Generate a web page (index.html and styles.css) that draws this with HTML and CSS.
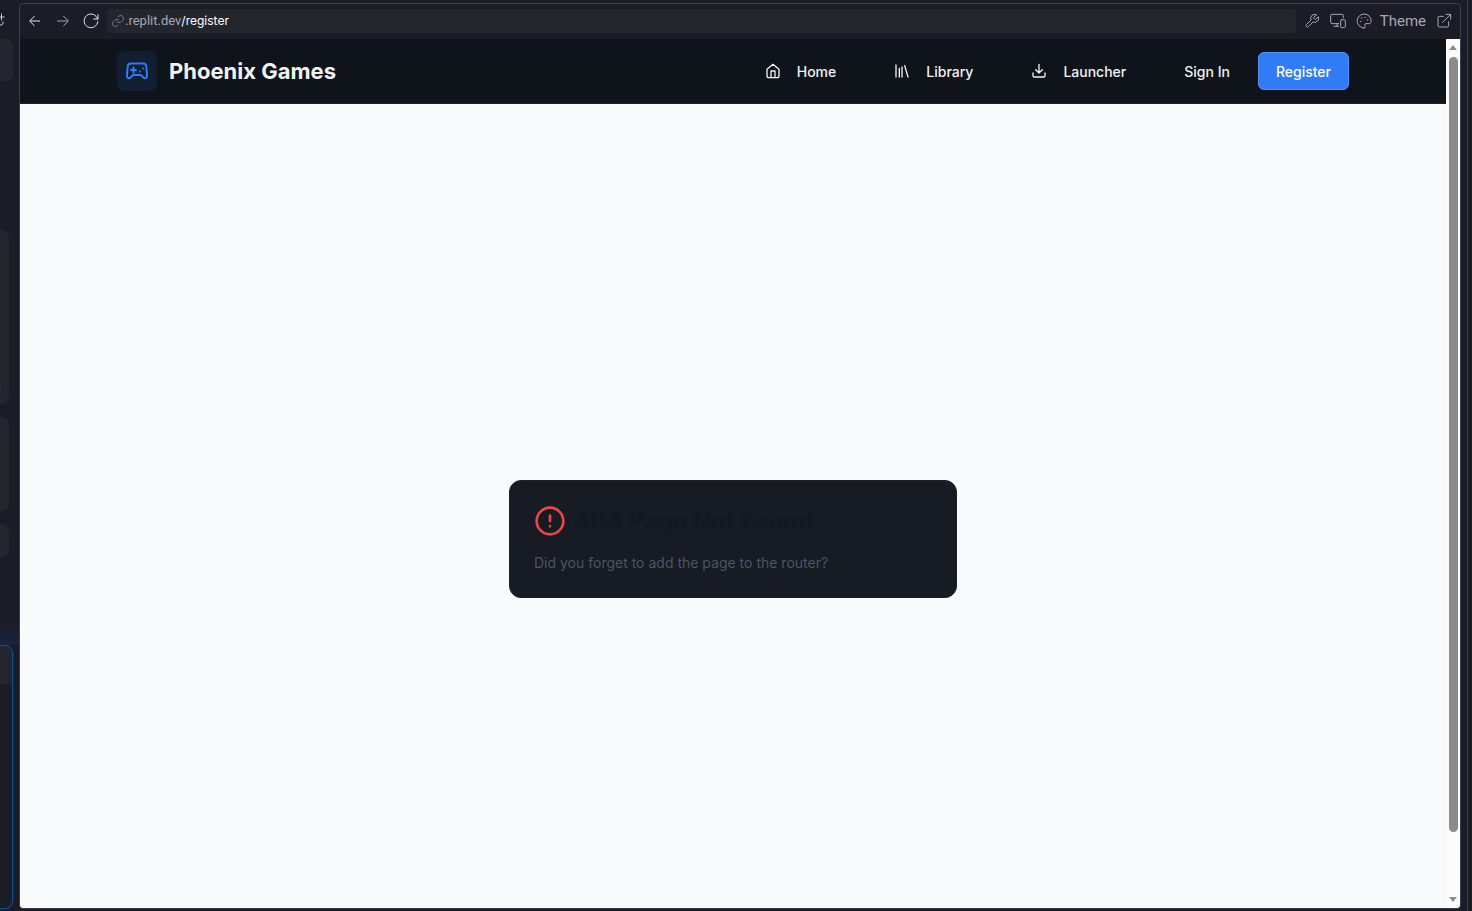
FILE: index.html
```html
<!DOCTYPE html>
<html lang="en">
<head>
<meta charset="utf-8">
<title>Phoenix Games</title>
<link rel="stylesheet" href="styles.css">
</head>
<body>
<div class="workspace">
  <aside class="side" aria-label="Chat">
    <div class="side-top">
      <svg width="6" height="16" viewBox="0 0 6 16"><path d="M1.500 2v6M-1 5h5M3 10v1q0 2-2 2h-3" /></svg>
    </div>
    <div class="tab"></div>
    <div class="messages">
      <div class="message tall"><span class="chip"></span></div>
      <div class="message medium"></div>
      <div class="message small"></div>
    </div>
    <div class="composer"><div class="composer-head"></div></div>
  </aside>

  <section class="preview">
    <div class="toolbar">
      <div class="history">
        <button class="tool bright" aria-label="Back"><svg width="16" height="16" viewBox="0 0 24 24"><path d="M19 12H5M11 5l-7 7 7 7"/></svg></button>
        <button class="tool" aria-label="Forward"><svg width="16" height="16" viewBox="0 0 24 24"><path d="M4 12h15M13 5l7 7-7 7"/></svg></button>
        <button class="tool bright" aria-label="Reload"><svg width="16" height="16" viewBox="0 0 24 24"><path d="M22.500 2.500v6.500h-6.500M22 9A10.300 10.300 0 1 0 22.300 13"/></svg></button>
      </div>
      <a class="address" href="#register">
        <svg width="14" height="14" viewBox="0 0 24 24"><path d="M10 13a5 5 0 0 0 7.500.5l3-3a5 5 0 0 0-7-7L12 5M14 11a5 5 0 0 0-7.500-.5l-3 3a5 5 0 0 0 7 7L12 19"/></svg>
        <span class="url"><span class="host">.replit.dev</span><span class="path">/register</span></span>
      </a>
      <div class="actions">
        <button class="tool" aria-label="Developer tools"><svg width="16" height="16" viewBox="0 0 24 24"><path d="M14.700 6.300a1 1 0 0 0 0 1.400l1.600 1.600a1 1 0 0 0 1.400 0l3.770-3.770a6 6 0 0 1-7.940 7.940l-6.910 6.910a2.120 2.120 0 0 1-3-3l6.910-6.910a6 6 0 0 1 7.940-7.940z"/></svg></button>
        <button class="tool" aria-label="Device size"><svg width="16" height="16" viewBox="0 0 24 24"><path d="M20 7V4a2 2 0 0 0-2-2H3a2 2 0 0 0-2 2v10a2 2 0 0 0 2 2h10M10.500 16v4M6 20h7"/><rect x="16" y="10" width="7" height="12" rx="1.500"/></svg></button>
        <button class="tool theme"><svg width="16" height="16" viewBox="0 0 24 24"><path d="M12 22.500a10.500 10.500 0 1 1 10.700-10c0 3-2.200 4-4.700 3.500h-3a2 2 0 0 0-1.400 3.400c1 1.200.2 3.100-1.600 3.100z"/><path d="M7 12.500v.1M8.500 7.500v.1M13.500 6.500v.1M17.500 10.500v.1" class="dots"/></svg><span>Theme</span></button>
        <button class="tool" aria-label="Open in new tab"><svg width="16" height="16" viewBox="0 0 24 24"><path d="M19 13v6a2 2 0 0 1-2 2H5a2 2 0 0 1-2-2V7a2 2 0 0 1 2-2h6M15 2h7v7M10 14 22 2"/></svg></button>
      </div>
    </div>

    <div class="frame">
      <div class="site">
        <header class="site-header">
          <div class="header-inner">
            <a class="brand" href="#home">
              <span class="brand-mark"><svg width="24" height="24" viewBox="0 0 24 24"><path d="M6 4.500h12a3.200 3.200 0 0 1 3.300 3L22 16.200c.2 1.800-.7 3.100-2 3.100-.8 0-1.300-.4-1.800-1l-1.300-1.500a2 2 0 0 0-1.500-.7H8.600a2 2 0 0 0-1.500.7l-1.300 1.500c-.5.600-1 1-1.800 1-1.300 0-2.200-1.300-2-3.100L2.700 7.500a3.200 3.200 0 0 1 3.300-3zM6 11h5M8.500 8.500v5M15 12.500v.01M18 9.500v.01"/></svg></span>
              <span class="brand-name">Phoenix Games</span>
            </a>
            <nav class="nav">
              <a class="nav-link" href="#home"><svg width="16" height="16" viewBox="0 0 24 24"><path d="m3 9.500 9-7.500 9 7.500V19a3 3 0 0 1-3 3H6a3 3 0 0 1-3-3zM9 22V12h6v10"/></svg>Home</a>
              <a class="nav-link" href="#library"><svg width="16" height="16" viewBox="0 0 24 24"><path d="m16 4 5 17M12 6v15M8 8v13M3 3v18"/></svg>Library</a>
              <a class="nav-link" href="#launcher"><svg width="16" height="16" viewBox="0 0 24 24"><path d="M21 15v4a2 2 0 0 1-2 2H5a2 2 0 0 1-2-2v-4M7 10l5 5 5-5M12 15V2"/></svg>Launcher</a>
              <a class="nav-link" href="#sign-in">Sign In</a>
              <button class="register">Register</button>
            </nav>
          </div>
        </header>
        <main class="page">
          <div class="card">
            <div class="card-title">
              <svg width="32" height="32" viewBox="0 0 24 24"><circle cx="12" cy="12" r="10"/><path d="M12 8v4M12 16h.01"/></svg>
              <h1>404 Page Not Found</h1>
            </div>
            <p>Did you forget to add the page to the router?</p>
          </div>
        </main>
      </div>
      <div class="scrollbar" aria-hidden="true">
        <span class="arrow up"></span>
        <span class="track"><span class="thumb"></span></span>
        <span class="arrow down"></span>
      </div>
    </div>
  </section>
  <div class="edge"></div>
</div>
</body>
</html>
```
FILE: styles.css
```css
* { box-sizing: border-box; }

body {
  margin: 0;
  background: #1b1c25;
  font-family: Inter, "Liberation Sans", sans-serif;
}

svg {
  display: block;
  flex: none;
  fill: none;
  stroke: currentColor;
  stroke-width: 2;
  stroke-linecap: round;
  stroke-linejoin: round;
}

a { color: inherit; text-decoration: none; }

button {
  border: 0;
  margin: 0;
  padding: 0;
  background: none;
  color: inherit;
  font: inherit;
}

.workspace {
  display: flex;
  height: 100vh;
}

/* Chat column */
.side {
  width: 19px;
  flex: none;
  display: flex;
  flex-direction: column;
  padding-bottom: 2px;
}

.side-top {
  height: 39px;
  padding-top: 12px;
  color: #c2c8cc;
}

.side-top svg { stroke-width: 1; }

.tab {
  width: 13px;
  height: 42px;
  border-radius: 0 6px 6px 0;
  background: #24262e;
}

.messages {
  flex: 1;
  display: flex;
  flex-direction: column;
  justify-content: flex-end;
  gap: 13px;
  padding-bottom: 87px;
  background: linear-gradient(to top, #182440, #1b1c25 24px);
}

.message {
  width: 9px;
  border-radius: 0 8px 8px 0;
  background: #24262e;
}

.tall {
  height: 174px;
  display: flex;
  align-items: flex-end;
  padding-bottom: 12px;
}

.chip {
  width: 1px;
  height: 10px;
  background: #2c2e38;
}

.medium { height: 94px; }
.small { height: 34px; }

.composer {
  width: 13px;
  height: 264px;
  border: 1px solid #0053a6;
  border-left: 0;
  border-radius: 0 8px 8px 0;
  overflow: hidden;
  background: #1b1d26;
}

.composer-head {
  height: 38px;
  background: #24262e;
}

/* Preview pane */
.preview {
  flex: 1;
  min-width: 0;
  display: flex;
  flex-direction: column;
  margin: 3px 0 2px;
  border: 1px solid #3c3e4b;
  border-radius: 4px;
  overflow: hidden;
}

.toolbar {
  height: 35px;
  flex: none;
  display: flex;
  align-items: center;
  gap: 8px;
  padding: 0 8px 2px 7px;
  color: #a5a8b3;
}

.toolbar svg { stroke-width: 1.5; }

.history {
  display: flex;
  gap: 12px;
}

.tool {
  display: flex;
  align-items: center;
  gap: 8px;
}

.bright { color: #e8e9ee; }

.address {
  flex: 1;
  display: flex;
  align-items: center;
  height: 24px;
  padding: 0 4px;
  border-radius: 4px;
  background: #24262e;
}

.address svg { color: #83858f; }
.url { display: flex; align-items: baseline; }
.host { font: 13px Roboto, sans-serif; }
.path { font-size: 12px; color: #fff; }

.actions {
  display: flex;
  align-items: center;
  gap: 10px;
}

.theme { font: 15px Roboto, sans-serif; }
.theme .dots { stroke-width: 2; }

/* Game site */
.frame {
  flex: 1;
  min-height: 0;
  display: flex;
}

.site {
  flex: 1;
  min-width: 0;
  display: flex;
  flex-direction: column;
  overflow: hidden;
  background: #f9fafb;
}

.site-header {
  height: 65px;
  flex: none;
  border-bottom: 1px solid #1d2027;
  background: #0f141b;
  color: #f0f1f3;
}

.header-inner {
  max-width: 1280px;
  height: 100%;
  margin: 0 auto;
  padding: 0 24px;
  display: flex;
  align-items: center;
  justify-content: space-between;
}

.brand {
  display: flex;
  align-items: center;
  gap: 12px;
}

.brand-mark {
  padding: 8px;
  border-radius: 8px;
  background: #121e32;
  color: #2f7bf6;
}

.brand-name {
  font-size: 22px;
  font-weight: 700;
}

.nav {
  display: flex;
  align-items: center;
  gap: 58px;
  font-size: 14px;
  font-weight: 500;
}

.nav-link {
  display: flex;
  align-items: center;
  gap: 16px;
}

.register {
  height: 38px;
  margin-left: -30px;
  padding: 0 17px;
  border: 1px solid #5290f7;
  border-radius: 6px;
  background: #317bf6;
  color: #fff;
}

.page {
  height: 100%;
  flex: none;
  display: flex;
  align-items: center;
  justify-content: center;
}

.card {
  width: 100%;
  max-width: 448px;
  padding: 24px;
  border: 1px solid #1d2129;
  border-radius: 12px;
  background: #171b23;
}

.card-title {
  display: flex;
  align-items: center;
  gap: 8px;
  color: #ef4444;
}

.card h1 {
  margin: 0;
  font-size: 24px;
  line-height: 32px;
  font-weight: 700;
  color: #111827;
}

.card p {
  margin: 16px 0 0;
  font-size: 14px;
  line-height: 20px;
  color: #4b5563;
}

.scrollbar {
  width: 14px;
  flex: none;
  display: flex;
  flex-direction: column;
  align-items: center;
  gap: 7px;
  padding: 6px 0;
  background: #fcfcfc;
}

.arrow {
  border: 4px solid transparent;
}

.up { border-top: 0; border-bottom: 5px solid #8b8b8b; }
.down { border-bottom: 0; border-top: 5px solid #8b8b8b; }

.track {
  flex: 1;
  width: 9px;
}

.thumb {
  display: block;
  height: 93%;
  border-radius: 5px;
  background: #8b8b8b;
}

.edge {
  width: 11px;
  flex: none;
  border-right: 4px solid #1b1c1f;
  background: linear-gradient(to left, #3c3e4b 1px, #1a1d29 1px);
  background-clip: padding-box;
}
```
